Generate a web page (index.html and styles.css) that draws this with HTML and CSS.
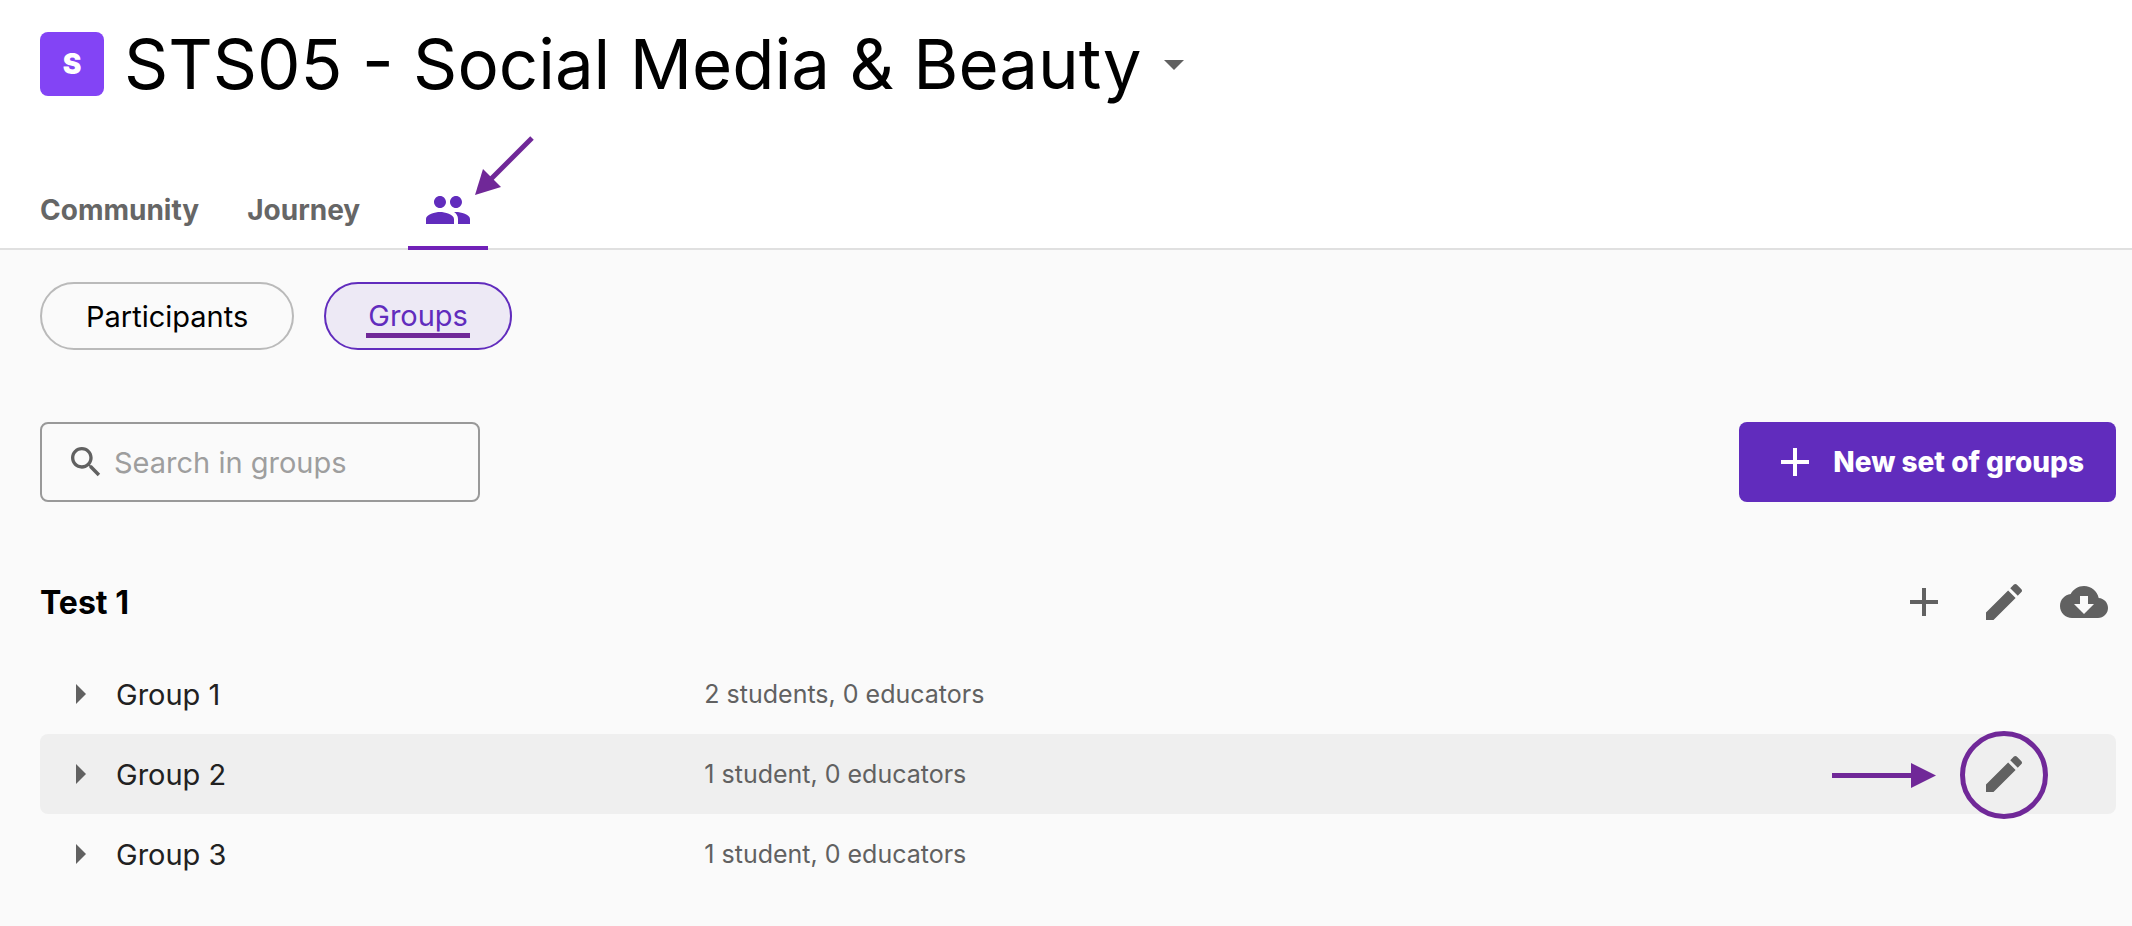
FILE: index.html
```html
<!DOCTYPE html>
<html lang="en">
<head>
  <meta charset="UTF-8">
  <meta name="viewport" content="width=device-width, initial-scale=1.0">
  <title>STS05 - Social Media &amp; Beauty</title>
  <link rel="stylesheet" href="styles.css">
</head>
<body>
  <header>
    <div class="course">
      <span class="badge">S</span>
      <h1>STS05 - Social Media &amp; Beauty</h1>
      <button class="icon-btn" type="button" aria-label="Switch course">
        <svg class="icon" viewBox="0 0 24 24"><path d="M7 10l5 5 5-5z"/></svg>
      </button>
    </div>
    <nav class="tabs">
      <a href="#community">Community</a>
      <a href="#journey">Journey</a>
      <a href="#people" class="active" aria-label="People">
        <svg class="icon" viewBox="0 0 24 24"><path d="M16 11c1.66 0 2.99-1.34 2.99-3S17.66 5 16 5s-3 1.34-3 3 1.34 3 3 3zm-8 0c1.66 0 2.99-1.34 2.99-3S9.66 5 8 5 5 6.340 5 8s1.340 3 3 3zm0 2c-2.330 0-7 1.170-7 3.500V19h14v-2.500c0-2.330-4.670-3.500-7-3.500zm8 0c-.29 0-.62.02-.97.05 1.160.84 1.970 1.970 1.970 3.450V19h6v-2.500c0-2.330-4.670-3.500-7-3.500z"/></svg>
        <svg class="pointer pointer-tab" viewBox="0 0 60 60"><path d="M58 2L16 44" stroke="#702898" stroke-width="5"/><path d="M1 59L9 33l18 18z"/></svg>
      </a>
    </nav>
  </header>

  <main>
    <div class="pills">
      <button type="button">Participants</button>
      <button type="button" class="selected"><span>Groups</span></button>
    </div>

    <div class="toolbar">
      <label class="search">
        <svg viewBox="0 0 24 24"><path d="M15.5 14h-.79l-.28-.27C15.41 12.590 16 11.110 16 9.500 16 5.910 13.090 3 9.500 3S3 5.910 3 9.500 5.910 16 9.500 16c1.610 0 3.090-.59 4.230-1.570l.27.28v.79l5 4.990L20.490 19l-4.990-5zm-6 0C7.010 14 5 11.990 5 9.500S7.010 5 9.500 5 14 7.010 14 9.500 11.990 14 9.500 14z"/></svg>
        <input type="text" placeholder="Search in groups" aria-label="Search in groups">
      </label>
      <button class="primary" type="button">
        <svg class="icon" viewBox="0 0 24 24"><path d="M19 13h-6v6h-2v-6H5v-2h6V5h2v6h6v2z"/></svg>
        New set of groups
      </button>
    </div>

    <section>
      <div class="set-header">
        <h2>Test 1</h2>
        <div class="set-actions">
          <button class="icon-btn" type="button" aria-label="Add group">
            <svg class="icon" viewBox="0 0 24 24"><path d="M19 13h-6v6h-2v-6H5v-2h6V5h2v6h6v2z"/></svg>
          </button>
          <button class="icon-btn" type="button" aria-label="Edit set">
            <svg class="icon" viewBox="0 0 24 24"><path d="M3 17.250V21h3.750L17.810 9.940l-3.750-3.750L3 17.250zM20.710 7.040c.39-.39.39-1.020 0-1.410l-2.340-2.340c-.39-.39-1.020-.39-1.410 0l-1.830 1.830 3.750 3.750 1.830-1.830z"/></svg>
          </button>
          <button class="icon-btn" type="button" aria-label="Download set">
            <svg class="icon" viewBox="0 0 24 24"><path d="M19.350 10.040C18.670 6.590 15.640 4 12 4 9.110 4 6.600 5.640 5.350 8.040 2.340 8.360 0 10.910 0 14c0 3.310 2.690 6 6 6h13c2.760 0 5-2.240 5-5 0-2.640-2.050-4.780-4.650-4.960zM17 13l-5 5-5-5h3V9h4v4h3z"/></svg>
          </button>
        </div>
      </div>

      <table class="groups">
        <tbody>
          <tr>
            <td class="name">
              <button type="button"><svg class="icon" viewBox="0 0 24 24"><path d="M10 17l5-5-5-5v10z"/></svg>Group 1</button>
            </td>
            <td class="members">2 students, 0 educators</td>
            <td class="actions"></td>
          </tr>
          <tr class="hovered">
            <td class="name">
              <button type="button"><svg class="icon" viewBox="0 0 24 24"><path d="M10 17l5-5-5-5v10z"/></svg>Group 2</button>
            </td>
            <td class="members">1 student, 0 educators</td>
            <td class="actions">
              <button class="icon-btn edit" type="button" aria-label="Edit Group 2">
                <svg class="icon" viewBox="0 0 24 24"><path d="M3 17.250V21h3.750L17.810 9.940l-3.750-3.750L3 17.250zM20.710 7.040c.39-.39.39-1.020 0-1.410l-2.340-2.340c-.39-.39-1.020-.39-1.410 0l-1.830 1.830 3.750 3.750 1.830-1.830z"/></svg>
                <svg class="pointer pointer-edit" viewBox="0 0 216 88"><path d="M0 42h80v5H0z"/><path d="M79 32l25 12.500L79 57z"/><circle cx="172" cy="44" r="41.500" fill="none" stroke="#702898" stroke-width="5"/></svg>
              </button>
            </td>
          </tr>
          <tr>
            <td class="name">
              <button type="button"><svg class="icon" viewBox="0 0 24 24"><path d="M10 17l5-5-5-5v10z"/></svg>Group 3</button>
            </td>
            <td class="members">1 student, 0 educators</td>
            <td class="actions"></td>
          </tr>
        </tbody>
      </table>
    </section>
  </main>
</body>
</html>
```
FILE: styles.css
```css
* {
  box-sizing: border-box;
}

body {
  margin: 0;
  font-family: Inter, 'Open Sans', sans-serif;
  font-size: 29px;
  color: #000;
  background-color: #fafafa;
}

button, input {
  font: inherit;
  color: inherit;
}

button {
  padding: 0;
  border: none;
  background: none;
  cursor: pointer;
}

svg {
  display: block;
  flex: none;
  fill: currentColor;
}

.icon {
  width: 48px;
  height: 48px;
}

.icon-btn {
  color: #616161;
}

header {
  background-color: #fff;
  border-bottom: 2px solid #e0e0e0;
}

.course {
  display: flex;
  align-items: center;
  height: 128px;
  padding: 0 40px;
}

.badge {
  display: flex;
  align-items: center;
  justify-content: center;
  width: 64px;
  height: 64px;
  border-radius: 8px;
  background-color: #8344f5;
  color: #fff;
  font-size: 28px;
  font-weight: 900;
}

h1 {
  margin: 0 8px 0 20px;
  font-size: 69px;
  font-weight: 400;
  line-height: 80px;
}

.tabs {
  display: flex;
  align-items: stretch;
  gap: 48px;
  height: 122px;
  padding: 46px 40px 0;
  margin-bottom: -2px;
}

.tabs a {
  position: relative;
  display: flex;
  align-items: center;
  border-bottom: 4px solid transparent;
  color: #666;
  font-size: 28px;
  font-weight: 700;
  text-decoration: none;
}

.tabs .active {
  padding: 0 16px;
  border-color: #7121b8;
  color: #612cbd;
}

/* callout arrows */
.pointer {
  position: absolute;
  fill: #702898;
  pointer-events: none;
}

.pointer-tab {
  left: 66px;
  top: -38px;
  width: 60px;
  height: 60px;
}

.pointer-edit {
  left: -148px;
  top: -19px;
  width: 216px;
  height: 88px;
}

main {
  padding: 32px 16px 32px 40px;
}

.pills {
  display: flex;
  gap: 30px;
  margin-bottom: 72px;
}

.pills button {
  height: 68px;
  padding: 0 44px;
  border: 2px solid #bababa;
  border-radius: 34px;
}

.pills .selected {
  padding: 0 40px;
  border-color: #612cbd;
  background-color: #ede9f5;
  color: #612cbd;
}

.selected span {
  display: block;
  margin-top: 4px;
  padding: 0 2px;
  border-bottom: 5px solid #702898;
}

.toolbar {
  display: flex;
  justify-content: space-between;
  margin-bottom: 60px;
}

.search {
  display: flex;
  align-items: center;
  gap: 8px;
  width: 440px;
  height: 80px;
  padding: 0 24px;
  border: 2px solid #999;
  border-radius: 8px;
  color: #616161;
}

.search svg {
  width: 40px;
  height: 40px;
}

.search input {
  flex: 1;
  min-width: 0;
  padding: 0;
  border: none;
  outline: none;
  background: none;
}

.search input::placeholder {
  color: #9e9e9e;
  opacity: 1;
}

.primary {
  display: flex;
  align-items: center;
  gap: 14px;
  height: 80px;
  padding: 0 32px;
  border-radius: 8px;
  background-color: #612cbd;
  color: #fff;
  font-size: 28px;
  font-weight: 800;
}

.set-header {
  display: flex;
  align-items: center;
  justify-content: space-between;
  height: 80px;
  padding-right: 8px;
  margin-bottom: 12px;
}

.set-header h2 {
  margin: 0;
  font-size: 32px;
  font-weight: 700;
}

.set-actions {
  display: flex;
  gap: 32px;
}

.groups {
  width: 100%;
  table-layout: fixed;
  border-collapse: separate;
  border-spacing: 0;
}

.groups td {
  height: 80px;
  padding: 0;
}

.groups .name {
  width: 32%;
  padding-left: 16px;
  color: #212121;
}

.name button {
  display: flex;
  align-items: center;
  gap: 12px;
}

.name svg {
  color: #616161;
}

.groups .members {
  color: #616161;
  font-size: 25px;
}

.groups .actions {
  width: 240px;
  padding-right: 88px;
}

.edit {
  position: relative;
  display: block;
  margin-left: auto;
}

.hovered td {
  background-color: #efefef;
}

.hovered td:first-child {
  border-radius: 8px 0 0 8px;
}

.hovered td:last-child {
  border-radius: 0 8px 8px 0;
}
```
